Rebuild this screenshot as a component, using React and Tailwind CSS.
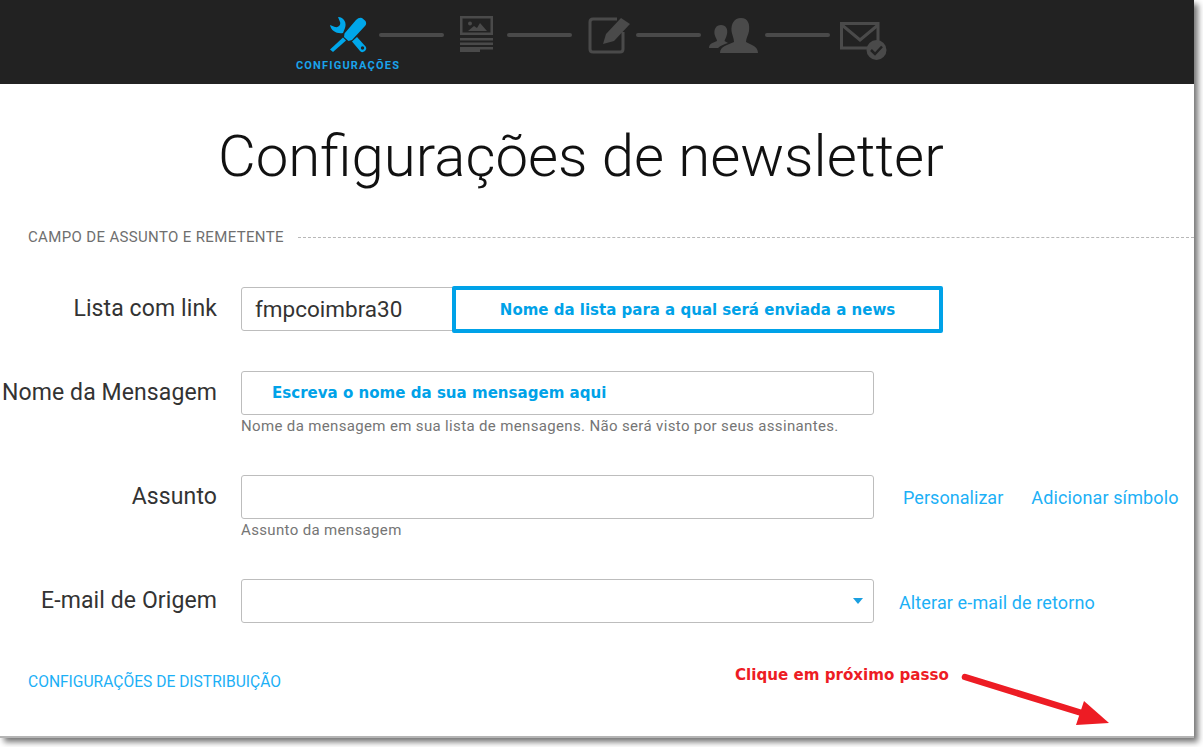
import React from "react";

const G = "#4a4a4a";
const Line = () => <div className="w-[65px] h-[4px] rounded-full bg-[#4a4a4a] mt-[33px]" />;

function Tools() {
  return (
    <svg width="39" height="36" viewBox="0 0 39 36">
      <g fill="#00a7ea">
        <path d="M9 0 C15 0 18 6 16 11 L14 16 C8 17 2 14 1 8 L6 10 C10 11 12 7 11 5 Z" />
        <path d="M27 3 Q30 0 33 1 L36.500 4 Q38 7 36 9 L23 23 L19.500 24 L15 20 L15.500 16.500Z" />
        <path d="M14 20.500 L17 23.500 L4 35 L1 32.500Z" />
        <path d="M23 24.500 L28 20 L37 30 Q38 32 36 34 L34 35 Q32 35.500 31 34Z" />
      </g>
      <circle cx="33.500" cy="31" r="1.700" fill="#222" />
    </svg>
  );
}

function Newspaper() {
  return (
    <svg width="34" height="36" viewBox="0 0 34 36" fill={G}>
      <path d="M0 0H33V19H0Z M2.500 2.500V16.500H30.500V2.500Z" fillRule="evenodd" />
      <circle cx="10" cy="7.500" r="2" />
      <path d="M8 15 L14 10 L17 12 L20 7 L27 15Z" />
      <path d="M0 22H33V24.500H0Z M0 26.500H33V29H0Z M0 31H33V33.500H20V36H0Z" />
    </svg>
  );
}

function Edit() {
  return (
    <svg width="43" height="37" viewBox="0 0 43 37">
      <path d="M29 2 H5 Q2 2 2 5 V32 Q2 35 5 35 H32 Q35 35 35 32 V15" fill="none" stroke={G} strokeWidth="3" />
      <path d="M33 1 L42 7 L26 24 L15 27 L18 17Z" fill={G} />
    </svg>
  );
}

function Users() {
  return (
    <svg width="50" height="36" viewBox="0 0 50 36" fill={G}>
      <path d="M12 8 C17 8 19 12 18 17 C17.500 20 16 22 15.500 24 L19 26 C15 27 11 29 9 31 H0 C0 27 3 26 8 24 C8 22 6 20 5.500 17 C5 12 7 8 12 8Z" />
      <path d="M32 1 C39 1 41 7 40 14 C39.500 18 37 21 37 25 C42 28 49 29 49 36 H11 C11 29 19 28 25 25 C25 21 23 18 22.500 14 C22 7 25 1 32 1Z" />
    </svg>
  );
}

function Mail() {
  return (
    <svg width="48" height="38" viewBox="0 0 48 38">
      <path d="M1.500 1.500H38V26H1.500Z" fill="none" stroke={G} strokeWidth="3" />
      <path d="M2 3 L20 18 L38 3" fill="none" stroke={G} strokeWidth="3" />
      <circle cx="36.500" cy="28" r="10" fill={G} />
      <path d="M31 28 L35 32 L42 24.500" fill="none" stroke="#222" strokeWidth="2.500" />
    </svg>
  );
}

function Row({ label, top, children }) {
  return (
    <div className={`flex items-start ${top}`}>
      <label className="w-[217px] h-[44px] shrink-0 text-right text-[23px] leading-[44px] tracking-[0.1px] text-[#333] whitespace-nowrap">{label}</label>
      <div className="ml-[24px]">{children}</div>
    </div>
  );
}

const inputClass = "h-[44px] border border-[#bdbdbd] rounded-[3px] bg-white";

export default function App() {
  return (
    <div className="relative w-[1203px] h-[747px] overflow-hidden bg-[#fff] font-['Roboto',sans-serif]">
      <div className="relative w-[1194px] h-[738px] bg-white border-b-2 border-[#b5b5b5] shadow-[4px_4px_6px_rgba(0,0,0,0.55)]">
        <header className="h-[84px] bg-[#222222] flex justify-start pl-[296px]">
          <div className="flex flex-col items-center w-[104px] pt-[17px]">
            <Tools />
            <span className="mt-[6px] text-[11px] leading-[13px] font-bold tracking-[1.200px] text-[#1aa3ea] whitespace-nowrap">CONFIGURAÇÕES</span>
          </div>
          <div className="ml-[-21px]"><Line /></div>
          <div className="ml-[16px] pt-[16px]"><Newspaper /></div>
          <div className="ml-[13px]"><Line /></div>
          <div className="ml-[16px] pt-[17px]"><Edit /></div>
          <div className="ml-[5px]"><Line /></div>
          <div className="ml-[8px] pt-[17px]"><Users /></div>
          <div className="ml-[6px]"><Line /></div>
          <div className="ml-[10px] pt-[22px]"><Mail /></div>
        </header>

        <h1 className="mt-[31px] pl-[218px] text-[58.150px] leading-[82px] font-light text-[#111] whitespace-nowrap">Configurações de newsletter</h1>

        <div className="mt-[30px] ml-[28px] flex items-center">
          <span className="text-[15px] leading-[20px] tracking-[0.35px] text-[#6f6f6f] whitespace-nowrap">CAMPO DE ASSUNTO E REMETENTE</span>
          <div className="ml-[14px] flex-1 border-t border-dashed border-[#b8b8b8]" />
        </div>

        <Row label="Lista com link" top="mt-[40px]">
          <div className={`${inputClass} w-[230px] px-[13px] text-[22.500px] leading-[42px] text-[#333]`}>fmpcoimbra30</div>
        </Row>

        <Row label="Nome da Mensagem" top="mt-[40px]">
          <div className={`${inputClass} w-[633px] pl-[30px] font-['DejaVu_Sans',sans-serif] font-bold text-[15.050px] leading-[42px] text-[#00a2e8]`}>Escreva o nome da sua mensagem aqui</div>
          <p className="mt-[2px] text-[15px] leading-[18px] tracking-[0.35px] text-[#757575] whitespace-nowrap">Nome da mensagem em sua lista de mensagens. Não será visto por seus assinantes.</p>
        </Row>

        <Row label="Assunto" top="mt-[40px]">
          <div className="flex items-center">
            <div className={`${inputClass} w-[633px]`} />
            <a className="ml-[29px] text-[18px] tracking-[0.05px] text-[#1cb0f6] whitespace-nowrap">Personalizar</a>
            <a className="ml-[28px] text-[18px] tracking-[0.12px] text-[#1cb0f6] whitespace-nowrap">Adicionar símbolo</a>
          </div>
          <p className="mt-[2px] text-[15px] leading-[18px] tracking-[0.35px] text-[#757575]">Assunto da mensagem</p>
        </Row>

        <Row label="E-mail de Origem" top="mt-[40px]">
          <div className="flex items-center">
            <div className={`${inputClass} w-[633px] flex items-center justify-end pr-[10px]`}>
              <div className="w-0 h-0 border-l-[5px] border-r-[5px] border-t-[6px] border-l-transparent border-r-transparent border-t-[#1a9fe0]" />
            </div>
            <a className="ml-[25px] pt-[2px] text-[18px] tracking-[0.12px] text-[#1cb0f6] whitespace-nowrap">Alterar e-mail de retorno</a>
          </div>
        </Row>

        <a className="block mt-[49px] ml-[28px] text-[15.600px] leading-[20px] text-[#1cb0f6] whitespace-nowrap">CONFIGURAÇÕES DE DISTRIBUIÇÃO</a>

        <div className="absolute left-[452px] top-[286px] w-[491px] h-[47px] border-[4px] border-[#00a2e8] rounded-[2px] bg-white flex items-center justify-center pt-[2px] font-['DejaVu_Sans',sans-serif] font-bold text-[15px] text-[#00a2e8] whitespace-nowrap">
          Nome da lista para a qual será enviada a news
        </div>
        <span className="absolute left-[735px] top-[665px] font-['DejaVu_Sans',sans-serif] font-bold text-[15.100px] leading-[20px] text-[#ed1c24] whitespace-nowrap">Clique em próximo passo</span>
        <svg className="absolute left-[960px] top-[672px]" width="155" height="56" viewBox="0 0 155 56">
          <path d="M5 5 L125 42" stroke="#ed1c24" strokeWidth="6.500" strokeLinecap="round" />
          <path d="M124 29 L149 51 L116 53Z" fill="#ed1c24" />
        </svg>
      </div>
    </div>
  );
}
